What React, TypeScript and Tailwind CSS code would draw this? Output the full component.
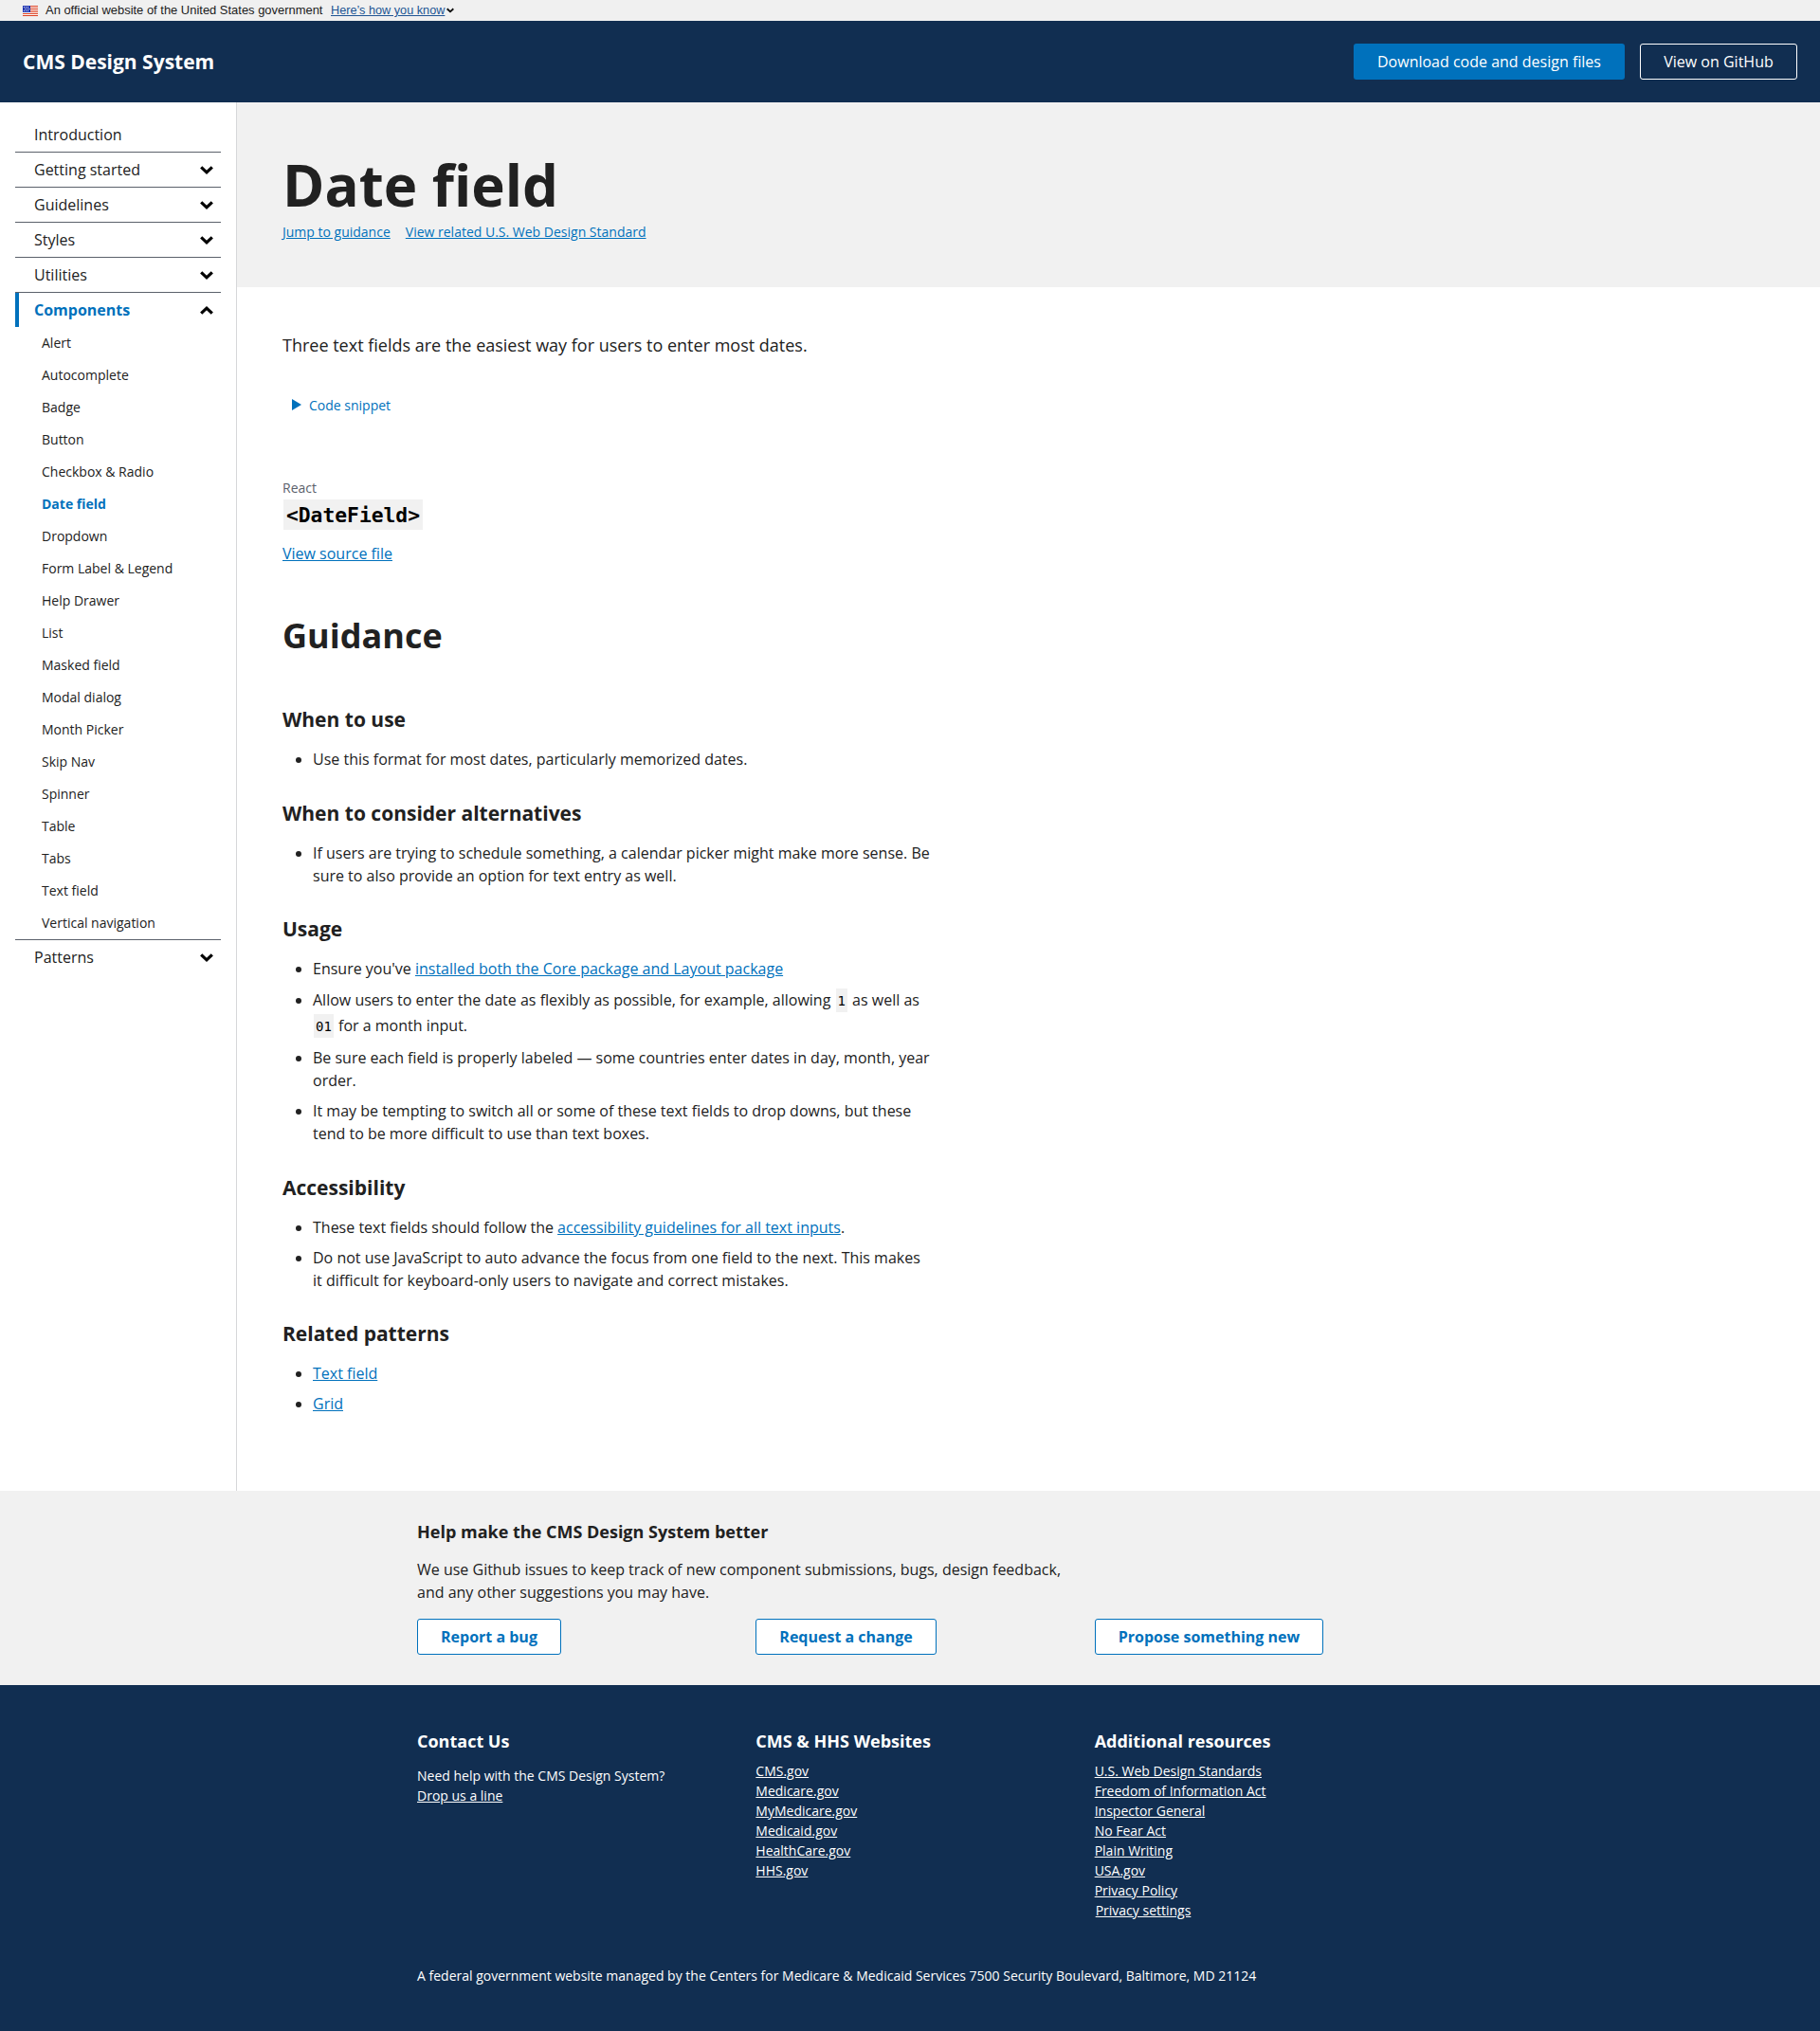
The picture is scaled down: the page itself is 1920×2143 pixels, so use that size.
import React from 'react';

const LINK = 'text-[#0071bc] underline';

function Chevron({ up = false, className = '' }: { up?: boolean; className?: string }) {
  return (
    <svg viewBox="0 0 14 9" className={className} fill="none" stroke="#000" strokeWidth="3.2">
      <path d={up ? 'M1.2 7.6 L7 2.2 L12.8 7.6' : 'M1.2 1.4 L7 6.8 L12.8 1.4'} />
    </svg>
  );
}

function Flag() {
  return (
    <svg viewBox="0 0 16 11" className="mt-[6px] h-[11px] w-4 shrink-0" shapeRendering="crispEdges">
      <rect width="16" height="11" fill="#fff" />
      {[0, 2, 4, 6, 8, 10].map((y) => (
        <rect key={y} y={y} width="16" height="1" fill="#db3e1f" />
      ))}
      <rect width="8" height="7" fill="#1e33b1" />
      {[1, 3, 5].map((y) =>
        [1, 3, 5].map((x) => <rect key={`${x}-${y}`} x={x + (y === 3 ? 1 : 0)} y={y} width="1" height="1" fill="#fff" />),
      )}
    </svg>
  );
}

const topItems = ['Getting started', 'Guidelines', 'Styles', 'Utilities'];
const components = [
  'Alert', 'Autocomplete', 'Badge', 'Button', 'Checkbox & Radio', 'Date field', 'Dropdown',
  'Form Label & Legend', 'Help Drawer', 'List', 'Masked field', 'Modal dialog', 'Month Picker',
  'Skip Nav', 'Spinner', 'Table', 'Tabs', 'Text field', 'Vertical navigation',
];

function NavGroup({ label }: { label: string }) {
  return (
    <li className="flex h-[37px] items-center justify-between border-t border-[#5b616b] pr-2 pl-5">
      <span>{label}</span>
      <Chevron className="h-[9px] w-[14px]" />
    </li>
  );
}

function Sidebar() {
  return (
    <nav className="w-[250px] shrink-0 border-r border-[#d6d7d9] pt-4 pr-4 pl-4">
      <ul className="text-base">
        <li className="flex h-9 items-center pl-5">Introduction</li>
        {topItems.map((label) => (
          <NavGroup key={label} label={label} />
        ))}
        <li>
          <div className="border-t border-[#5b616b]">
            <div className="flex h-9 items-center justify-between border-l-4 border-[#0071bc] pr-2 pl-4 font-bold text-[#0071bc]">
              <span>Components</span>
              <Chevron up className="h-[9px] w-[14px]" />
            </div>
          </div>
          <ul className="text-sm">
            {components.map((label) => (
              <li
                key={label}
                className={`flex h-[34px] items-center pl-7 ${label === 'Date field' ? 'font-bold text-[#0071bc]' : ''}`}
              >
                {label}
              </li>
            ))}
          </ul>
        </li>
        <NavGroup label="Patterns" />
      </ul>
    </nav>
  );
}

function Section({ title, children, className = '' }: { title: string; children: React.ReactNode; className?: string }) {
  return (
    <section className={className}>
      <h3 className="mb-4 text-[21px] leading-7 font-bold">{title}</h3>
      <ul className="flex w-[684px] flex-col gap-2 leading-6">{children}</ul>
    </section>
  );
}

function Item({ children, tall = false }: { children: React.ReactNode; tall?: boolean }) {
  return (
    <li className={`flex ${tall ? 'leading-[27px]' : ''}`}>
      <span
        className={`mr-3 ml-[14px] h-[6px] w-[6px] shrink-0 rounded-full bg-[#212121] ${tall ? 'mt-[11px]' : 'mt-[10px]'}`}
      />
      <span>{children}</span>
    </li>
  );
}

function Code({ children }: { children: React.ReactNode }) {
  return (
    <code className="mx-px bg-[#f1f1f1] px-[2px] pt-[5px] pb-1 font-['DejaVu_Sans_Mono',monospace] text-[14px] leading-none text-black">
      {children}
    </code>
  );
}

const sites = ['CMS.gov', 'Medicare.gov', 'MyMedicare.gov', 'Medicaid.gov', 'HealthCare.gov', 'HHS.gov'];
const resources = [
  'U.S. Web Design Standards', 'Freedom of Information Act', 'Inspector General', 'No Fear Act',
  'Plain Writing', 'USA.gov', 'Privacy Policy',
];
const feedback = ['Report a bug', 'Request a change', 'Propose something new'];

export default function App() {
  return (
    <div className="flex min-h-[2143px] w-[1920px] flex-col bg-white font-['Open_Sans',sans-serif] text-base text-[#212121]">
      <div className="flex h-[22px] bg-[#f0f0f0] pl-6 font-['Liberation_Sans',sans-serif] text-[12.95px] leading-[22px] text-[#1b1b1b]">
        <Flag />
        <span className="ml-2 w-[301px]">An official website of the United States government</span>
        <a className="text-[12.7px] text-[#205493] underline">Here’s how you know</a>
        <Chevron className="mt-[8px] ml-[2px] h-[6px] w-[8px]" />
      </div>

      <header className="flex h-[86px] items-center justify-between bg-[#112e51] px-6 text-white">
        <div className="pt-px text-[21px] font-bold">CMS Design System</div>
        <div className="flex gap-4">
          <a className="flex h-[38px] w-[286px] items-center justify-center rounded-[3px] bg-[#0071bc]">
            Download code and design files
          </a>
          <a className="flex h-[38px] w-[166px] items-center justify-center rounded-[3px] border border-white">View on GitHub</a>
        </div>
      </header>

      <div className="flex h-[1465px]">
        <Sidebar />
        <main className="flex-1">
          <div className="h-[195px] bg-[#f1f1f1] px-12 pt-12">
            <h1 className="text-[60px] leading-[78px] font-bold">Date field</h1>
            <div className="flex gap-4 text-sm leading-[21px]">
              <a className={LINK}>Jump to guidance</a>
              <a className={LINK}>View related U.S. Web Design Standard</a>
            </div>
          </div>
          <div className="px-12 pt-12">
            <p className="text-lg leading-[27px]">Three text fields are the easiest way for users to enter most dates.</p>
            <div className="mt-[39px] flex pl-[10px] text-sm leading-[21px] text-[#0071bc]">
              <svg viewBox="0 0 10 12" className="mt-1 mr-2 h-3 w-[10px]" fill="#0071bc">
                <path d="M0 0 L10 6 L0 12 Z" />
              </svg>
              Code snippet
            </div>
            <div className="mt-[66px] text-sm leading-[21px] text-[#5b616b]">React</div>
            <div className="mt-[2px] flex">
              <code className="ml-px h-8 w-[147px] bg-[#f1f1f1] text-center font-['DejaVu_Sans_Mono',monospace] text-[21.3px] leading-[34px] font-bold text-black">
                {'<DateField>'}
              </code>
            </div>
            <div className="mt-[13px] leading-6">
              <a className={LINK}>View source file</a>
            </div>
            <h2 className="mt-[51px] text-4xl leading-[48px] font-bold">Guidance</h2>

            <Section title="When to use" className="mt-[50px]">
              <Item>Use this format for most dates, particularly memorized dates.</Item>
            </Section>
            <Section title="When to consider alternatives" className="mt-[31px]">
              <Item>
                If users are trying to schedule something, a calendar picker might make more sense. Be sure to also
                provide an option for text entry as well.
              </Item>
            </Section>
            <Section title="Usage" className="mt-[30px]">
              <Item>
                Ensure you've <a className={LINK}>installed both the Core package and Layout package</a>
              </Item>
              <Item tall>
                Allow users to enter the date as flexibly as possible, for example, allowing <Code>1</Code> as well as{' '}
                <Code>01</Code> for a month input.
              </Item>
              <Item>Be sure each field is properly labeled — some countries enter dates in day, month, year order.</Item>
              <Item>
                It may be tempting to switch all or some of these text fields to drop downs, but these tend to be more
                difficult to use than text boxes.
              </Item>
            </Section>
            <Section title="Accessibility" className="mt-[31px]">
              <Item>
                These text fields should follow the <a className={LINK}>accessibility guidelines for all text inputs</a>.
              </Item>
              <Item>
                Do not use JavaScript to auto advance the focus from one field to the next. This makes it difficult for
                keyboard-only users to navigate and correct mistakes.
              </Item>
            </Section>
            <Section title="Related patterns" className="mt-[30px]">
              <Item><a className={LINK}>Text field</a></Item>
              <Item><a className={LINK}>Grid</a></Item>
            </Section>
          </div>
        </main>
      </div>

      <section className="h-[205px] bg-[#f1f1f1] px-[440px] pt-[30px]">
        <h4 className="text-lg leading-[27px] font-bold">Help make the CMS Design System better</h4>
        <p className="mt-[14px] w-[690px] leading-6">
          We use Github issues to keep track of new component submissions, bugs, design feedback, and any other
          suggestions you may have.
        </p>
        <div className="mt-4 grid w-[1072px] grid-cols-3">
          {feedback.map((label) => (
            <div key={label}>
              <a className="inline-flex h-[38px] items-center rounded-[3px] border border-[#0071bc] bg-white px-6 font-bold text-[#0071bc]">
                {label}
              </a>
            </div>
          ))}
        </div>
      </section>

      <footer className="flex-1 bg-[#112e51] px-[440px] pt-[46px] text-sm leading-[21px] text-white">
        <div className="grid h-[204px] w-[1072px] grid-cols-3">
          <div>
            <h4 className="text-lg leading-[27px] font-bold">Contact Us</h4>
            <p className="mt-3">Need help with the CMS Design System?</p>
            <a className="underline">Drop us a line</a>
          </div>
          <div>
            <h4 className="mb-[7px] text-lg leading-[27px] font-bold">CMS &amp; HHS Websites</h4>
            {sites.map((label) => (
              <div key={label}><a className="underline">{label}</a></div>
            ))}
          </div>
          <div>
            <h4 className="mb-[7px] text-lg leading-[27px] font-bold">Additional resources</h4>
            {resources.map((label) => (
              <div key={label}><a className="underline">{label}</a></div>
            ))}
            <div className="pl-px"><a className="underline">Privacy settings</a></div>
          </div>
        </div>
        <p className="mt-[46px]">
          A federal government website managed by the Centers for Medicare &amp; Medicaid Services 7500 Security
          Boulevard, Baltimore, MD 21124
        </p>
      </footer>
    </div>
  );
}
